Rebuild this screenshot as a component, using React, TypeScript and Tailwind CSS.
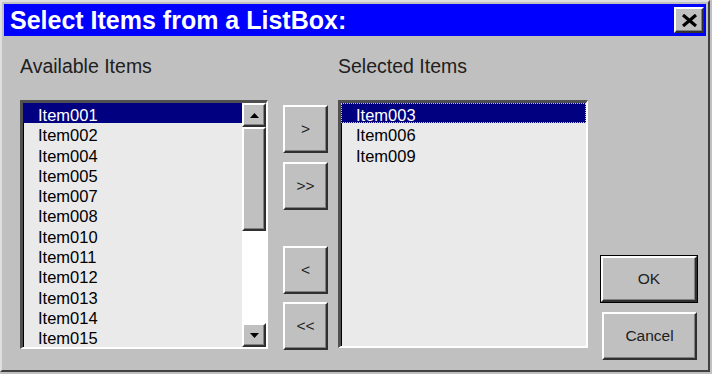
import React from 'react';

const available = ['Item001', 'Item002', 'Item004', 'Item005', 'Item007', 'Item008', 'Item010', 'Item011', 'Item012', 'Item013', 'Item014', 'Item015'];
const selected = ['Item003', 'Item006', 'Item009'];

const raised = 'border-2 border-t-white border-l-white border-r-[#303030] border-b-[#303030] shadow-[inset_-1px_-1px_0_#808080] bg-[#c0c0c0]';
const sunken = 'border-t-[3px] border-l-[3px] border-r-2 border-b-2 border-t-[#505050] border-l-[#505050] border-r-white border-b-white shadow-[inset_1px_1px_0_#000] bg-[#eaeaea]';

const Arrow: React.FC<{ down?: boolean }> = ({ down }) => (
  <svg width="9" height="5" viewBox="0 0 9 5">
    <polygon points={down ? '0,0 9,0 4.5,5' : '0,5 9,5 4.5,0'} fill="#000" />
  </svg>
);

const Row: React.FC<{ text: string; active?: boolean; focus?: boolean }> = ({ text, active, focus }) => (
  <div
    className={`h-[20.3px] leading-[24px] pl-[15px] whitespace-nowrap ${active ? 'bg-[#000080] text-white' : 'text-black'} ${focus ? 'outline-1 outline-dotted outline-[#e0d060] -outline-offset-1' : ''}`}
  >
    {text}
  </div>
);

const SmallButton: React.FC<{ label: string; className?: string }> = ({ label, className }) => (
  <div className={`${raised} h-[48px] w-[45px] flex items-center justify-center text-[15.5px] text-[#202020] ${className ?? ''}`}>
    {label}
  </div>
);

const App: React.FC = () => {
  return (
    <div className="w-[712px] h-[374px] bg-[#c0c0c0] font-['Liberation_Sans',Arial,sans-serif]">
      <div className="w-[710px] h-[372px] border-2 border-t-[#dfdfdf] border-l-[#dfdfdf] border-r-[#404040] border-b-[#404040] p-[2px] flex flex-col">
        {/* title bar */}
        <div className="h-[32px] bg-[#0000ff] flex items-start justify-between pl-[6px] pr-[2px]">
          <div className="text-white font-bold text-[25px] leading-[32px] whitespace-nowrap">Select Items from a ListBox:</div>
          <div className={`${raised} mt-[3px] w-[30px] h-[26px] flex items-center justify-center`}>
            <svg width="15" height="13" viewBox="0 0 15 13">
              <path d="M1 1 L14 12 M14 1 L1 12" stroke="#000" strokeWidth="3.2" />
            </svg>
          </div>
        </div>

        {/* body */}
        <div className="flex-1 flex pl-[16px]">
          <div className="w-[248px] flex flex-col">
            <div className="mt-[19px] h-[22px] leading-[22px] text-[19.5px] text-[#202020] whitespace-nowrap">Available Items</div>
            <div className={`${sunken} mt-[23px] h-[249px] flex overflow-hidden`}>
              <div className="w-[219px] text-[16.5px] overflow-hidden">
                {available.map((t, i) => (
                  <Row key={t} text={t} active={i === 0} />
                ))}
              </div>
              <div className="w-[24px] flex flex-col bg-white">
                <div className={`${raised} h-[24px] flex items-center justify-center`}>
                  <Arrow />
                </div>
                <div className={`${raised} h-[104px]`} />
                <div className="flex-1 bg-white" />
                <div className={`${raised} h-[24px] flex items-center justify-center`}>
                  <Arrow down />
                </div>
              </div>
            </div>
          </div>

          <div className="ml-[15px] w-[45px] flex flex-col pt-[69px]">
            <SmallButton label=">" />
            <SmallButton label=">>" className="mt-[9px]" />
            <SmallButton label="<" className="mt-[36px]" />
            <SmallButton label="<<" className="mt-[8px]" />
          </div>

          <div className="ml-[10px] w-[250px] flex flex-col">
            <div className="mt-[19px] h-[22px] leading-[22px] text-[19.5px] text-[#202020] whitespace-nowrap">Selected Items</div>
            <div className={`${sunken} mt-[23px] h-[248px] text-[16.5px] overflow-hidden`}>
              {selected.map((t, i) => (
                <Row key={t} text={t} active={i === 0} focus={i === 0} />
              ))}
            </div>
          </div>

          <div className="ml-[12px] w-[98px] flex flex-col pt-[219px]">
            <div className="h-[48px] w-[98px] border border-black">
              <div className={`${raised} h-full w-full flex items-center justify-center text-[15.5px] text-[#202020]`}>OK</div>
            </div>
            <div className={`${raised} mt-[9px] ml-[2px] h-[48px] w-[95px] flex items-center justify-center text-[15.5px] text-[#202020]`}>
              Cancel
            </div>
          </div>
        </div>
      </div>
    </div>
  );
};

export default App;
